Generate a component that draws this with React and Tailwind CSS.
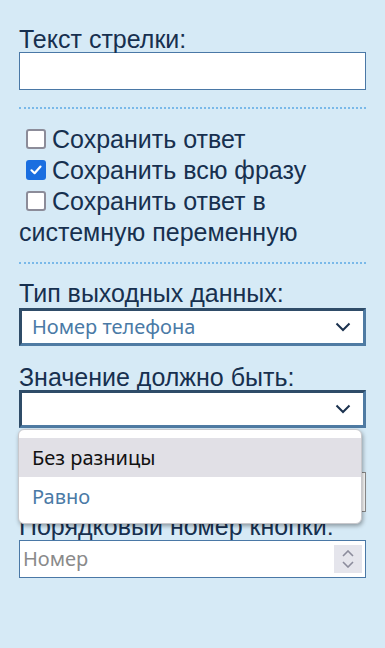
import React from "react";

function Check({ checked }) {
  if (checked) {
    return (
      <span className="inline-flex align-middle items-center justify-center w-[20px] h-[20px] rounded-[3px] bg-[#1a6ee0] ml-[7px] mr-[6px] relative top-[-2px]">
        <svg width="14" height="14" viewBox="0 0 14 14">
          <path d="M2.5 7.3 L5.6 10.2 L11.5 3.6" fill="none" stroke="#fff" strokeWidth="2.2" strokeLinecap="round" strokeLinejoin="round" />
        </svg>
      </span>
    );
  }
  return (
    <span className="inline-block align-middle w-[20px] h-[20px] rounded-[3px] border-2 border-[#8c8c99] bg-white ml-[7px] mr-[6px] relative top-[-2px]" />
  );
}

function Chevron() {
  return (
    <svg width="16" height="10" viewBox="0 0 16 10" className="shrink-0">
      <path d="M1.5 1.5 L8 8 L14.5 1.5" fill="none" stroke="#1b324f" strokeWidth="2" />
    </svg>
  );
}

export default function App() {
  const label = "block text-[25px] leading-[24px] text-[#17304f]";
  const selectBox =
    "h-[38px] w-[347px] bg-white border-[3px] border-t-[#2f4c68] border-l-[#2f4c68] border-r-[#4f7ba3] border-b-[#4f7ba3] flex items-center justify-between pl-[10px] pr-[12px]";
  return (
    <div
      className="w-[385px] h-[648px] bg-[#d6eaf6] pl-[19px] pt-[27px] overflow-hidden"
      style={{ fontFamily: '"Liberation Sans", Arial, sans-serif' }}
    >
      <span className={label}>Текст стрелки:</span>
      <div className="mt-[1px] h-[38px] w-[347px] bg-white border border-[#4a78a6]" />
      <div className="mt-[17px] w-[347px] border-t-2 border-dotted border-[#7ab9e9]" />

      <div className="mt-[15px] w-[347px] text-[25px] leading-[31px] text-[#17304f]">
        <div>
          <Check />Сохранить ответ
        </div>
        <div>
          <Check checked />Сохранить всю фразу
        </div>
        <div>
          <Check />Сохранить ответ в системную переменную
        </div>
      </div>

      <div className="mt-[14px] w-[347px] border-t-2 border-dotted border-[#7ab9e9]" />

      <span className={label + " mt-[17px]"}>Тип выходных данных:</span>
      <div className={selectBox + " mt-[3px]"}>
        <span className="text-[20px] text-[#4a7aa6]" style={{ fontFamily: '"Noto Sans", sans-serif' }}>
          Номер телефона
        </span>
        <Chevron />
      </div>

      <span className={label + " mt-[19px]"}>Значение должно быть:</span>
      <div className="relative mt-[1px]">
        <div className={selectBox}>
          <span />
          <Chevron />
        </div>

        <div className="mt-[44px] h-[40px] w-[347px] bg-white border border-[#8a8a8a]" />

        <span className={label + " mt-[2px]"}>Порядковый номер кнопки:</span>
        <div className="mt-[2px] h-[38px] w-[347px] bg-white border border-[#4a78a6] flex items-center justify-between pl-[3px] pr-[3px]">
          <span className="text-[20px] text-[#8a8a8a]" style={{ fontFamily: '"Noto Sans", sans-serif' }}>
            Номер
          </span>
          <div className="w-[28px] h-[28px] bg-[#e5e5ec] flex flex-col items-center justify-center gap-[4px]">
            <svg width="12" height="7" viewBox="0 0 12 7">
              <path d="M1 6 L6 1 L11 6" fill="none" stroke="#8c8c9c" strokeWidth="1.6" />
            </svg>
            <svg width="12" height="7" viewBox="0 0 12 7">
              <path d="M1 1 L6 6 L11 1" fill="none" stroke="#8c8c9c" strokeWidth="1.6" />
            </svg>
          </div>
        </div>

        <div
          className="absolute left-[-1px] top-[39px] w-[344px] h-[95px] bg-white rounded-[6px] border border-[#c8c8cc] shadow-[1px_2px_4px_rgba(0,0,0,0.35)] pt-[8px]"
          style={{ fontFamily: '"Noto Sans", sans-serif' }}
        >
          <div className="h-[39px] bg-[#e1e0e6] flex items-center pl-[13px] text-[20px] text-[#111]">
            Без разницы
          </div>
          <div className="h-[39px] flex items-center pl-[13px] text-[20px] text-[#4a7aa6]">
            Равно
          </div>
        </div>
      </div>
    </div>
  );
}
